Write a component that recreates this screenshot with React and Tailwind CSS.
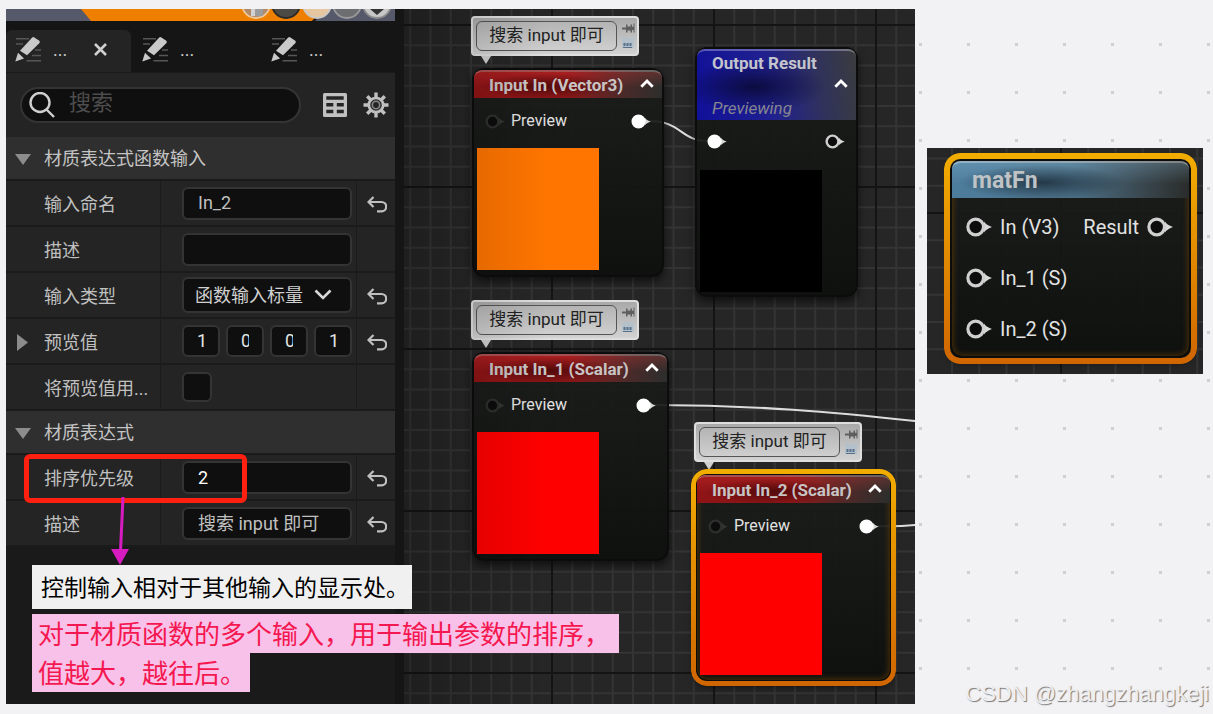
import React, { useState } from 'react';

const PencilIcon = () => (
  <svg width="26" height="26" viewBox="0 0 26 26" className="shrink-0" aria-hidden="true">
    <g stroke="#565656" strokeWidth="1.6">
      <path d="M1 2.7h13M1 8h7M20 14h6M17 19.5h9M11.5 24.7h14.5" />
    </g>
    <path d="M17.2 1.4q1-1 2.200 0l4.900 3.400q1 1 .2 2.100L12 19.200 5 14.800z" fill="#c9c9c9" />
    <path d="M3 16.800l6 5.800L.3 25.500z" fill="#c9c9c9" />
  </svg>
);

const TableIcon = () => (
  <svg width="24" height="24" viewBox="0 0 24 24" aria-hidden="true">
    <rect width="24" height="24" rx="1.5" fill="#c0c0c0" />
    <path
      d="M3.300 3.300h17.400v3.400H3.300zM3.300 10h7v3.400h-7zM13.800 10h7v3.400h-7zM3.300 16.800h7v3.400h-7zM13.800 16.800h7v3.400h-7z"
      fill="#242424"
    />
  </svg>
);

const GearIcon = () => (
  <svg width="26" height="26" viewBox="-13 -13 26 26" aria-hidden="true">
    <g stroke="#c0c0c0" strokeWidth="3.400">
      <path d="M0-12.500V-7M0 12.500V7M-12.500 0H-7M12.500 0H7M-8.800-8.800L-5-5M8.800 8.800L5 5M-8.800 8.800L-5 5M8.800-8.800L5-5" />
    </g>
    <circle r="7.200" fill="#242424" stroke="#c0c0c0" strokeWidth="2.800" />
    <circle r="3.700" fill="none" stroke="#8a8a8a" strokeWidth="1.600" />
  </svg>
);

const ResetIcon = () => (
  <svg width="20" height="17" viewBox="0 0 20 17" fill="none" stroke="#c0c0c0" strokeWidth="2.200" aria-hidden="true">
    <path d="M6.500 1L1.500 6l5 5M1.500 6H14.500a4.600 4.600 0 0 1 0 9.400H10" />
  </svg>
);

const Pin = ({ filled, dim, large }) => (
  <svg
    className={large ? 'h-5 w-[26px] shrink-0' : 'h-[15px] w-5 shrink-0'}
    viewBox="0 0 26 20"
    aria-hidden="true"
  >
    <path d="M18 4.500q1.500 3 8 5.500-6.500 2.500-8 5.500z" fill={dim ? '#343634' : '#d8d8d8'} />
    <circle
      cx="9.700"
      cy="10"
      r="7.800"
      fill={filled ? '#fff' : '#0b0c0b'}
      stroke={dim ? '#2d2f2d' : filled ? '#fff' : '#cfcfcf'}
      strokeWidth="3.200"
    />
  </svg>
);

const CaretUp = () => (
  <svg width="14" height="9" viewBox="0 0 14 9" fill="none" stroke="#fff" strokeWidth="2.800" aria-hidden="true">
    <path d="M1.300 7.700L7 2l5.700 5.700" />
  </svg>
);

// Strip of the 3D preview that is visible above the tabs
const ViewportStrip = () => (
  <svg className="block h-3 w-full bg-[#555969]" viewBox="0 0 389 12" preserveAspectRatio="none" aria-hidden="true">
    <path d="M75 0H318l-12 12H85z" fill="#ef7f00" />
    <path d="M318 0l-12 12h3l12-12z" fill="#24130a" />
    {[
      [250, '#b08a68', '#efc79a'],
      [280, '#4c4a45', '#2a2926'],
      [311, '#e5c6a0', '#c9c9c9'],
      [341, '#6c6e70', '#9a9a9a'],
      [371, '#c7c7c7', '#8c8c8c'],
    ].map(([x, fill, stroke]) => (
      <circle key={x} cx={x} cy="-5" r="14" fill={fill} stroke={stroke} strokeWidth="1.800" />
    ))}
    <path d="M245 0h12v7h-12z" fill="#9c9c9c" />
    <path d="M245 0h4v7h-4z" fill="#d2d2d2" />
    <path d="M364 0h14l-7 6z" fill="#333" />
  </svg>
);

const CategoryHeader = ({ children }) => (
  <h2 className="flex h-11 items-center border-b-2 border-[#1a1a1a] bg-[#2f2f2f] pl-2 pt-0.5 text-[18px] leading-6 text-[#c4c4c4]">
    <svg width="18" height="12" viewBox="0 0 18 12" className="mr-3" aria-hidden="true">
      <path d="M1 1h16L9 12z" fill="#8c8c8c" />
    </svg>
    {children}
  </h2>
);

const Row = ({ label, htmlFor, reset, expandable, children }) => (
  <div className="flex h-[46px] border-b-2 border-[#1b1b1b] bg-[#242424] text-[18px] text-[#c0c0c0]">
    <div className="flex w-[155px] shrink-0 items-center border-r border-[#1b1b1b] pl-2.5 pt-0.5">
      <span className="w-7 shrink-0">
        {expandable && (
          <svg width="12" height="17" viewBox="0 0 12 17" aria-hidden="true">
            <path d="M1 0l11 8.500L1 17z" fill="#8c8c8c" />
          </svg>
        )}
      </span>
      <label htmlFor={htmlFor} className="whitespace-nowrap">{label}</label>
    </div>
    <div className="flex min-w-0 flex-1 items-center pl-[21px] pr-1">{children}</div>
    <div className="flex w-[39px] shrink-0 items-center justify-center border-l border-[#1b1b1b] pl-0.5 pt-0.5">
      {reset && (
        <button type="button" aria-label={`重置${label}`}>
          <ResetIcon />
        </button>
      )}
    </div>
  </div>
);

const TextField = ({ id, value, bright }) => {
  const [text, setText] = useState(value);
  return (
    <input
      id={id}
      type="text"
      value={text}
      onChange={(e) => setText(e.target.value)}
      className={`h-[33px] w-full rounded-md border-2 border-[#343434] bg-[#0f0f0f] px-3.5 text-[18px] outline-none ${
        bright ? 'text-white' : 'pb-0.5 text-[#c0c0c0]'
      }`}
    />
  );
};

const DetailsPanel = () => {
  const [vector, setVector] = useState(['1', '0', '0', '1']);

  const handleVectorChange = (index, value) => {
    setVector(vector.map((v, i) => (i === index ? value : v)));
  };

  return (
    <aside className="w-[389px] shrink-0 bg-[#1a1a1a]">
      <ViewportStrip />

      <div className="flex h-[52px] items-end border-b border-[#1a1a1a] bg-[#151515]">
        <button type="button" className="flex h-[42px] w-[125px] items-center rounded-t-md bg-[#242424] pb-1 pl-[9px] text-[18px] text-[#c9c9c9]">
          <PencilIcon />
          <span className="ml-3">...</span>
          <svg width="13" height="13" viewBox="0 0 13 13" className="ml-[27px]" stroke="#d0d0d0" strokeWidth="2.600" aria-hidden="true">
            <path d="M1 1l11 11M12 1L1 12" />
          </svg>
        </button>
        <button type="button" className="flex h-[42px] w-[129px] items-center pb-1 pl-[11px] text-[18px] text-[#c9c9c9]">
          <PencilIcon />
          <span className="ml-3">...</span>
        </button>
        <button type="button" className="flex h-[42px] w-[129px] items-center pb-1 pl-[11px] text-[18px] text-[#c9c9c9]">
          <PencilIcon />
          <span className="ml-3">...</span>
        </button>
      </div>

      <div className="flex h-16 items-center bg-[#242424] pl-3.5 pr-1.5">
        <label className="flex h-9 flex-1 items-center rounded-full border-2 border-[#343434] bg-[#0f0f0f] pl-[7px]">
          <svg width="26" height="26" viewBox="0 0 26 26" fill="none" stroke="#d0d0d0" strokeWidth="2.400" className="shrink-0" aria-hidden="true">
            <circle cx="11" cy="10.500" r="9.500" />
            <path d="M17.500 17.500l7.500 7.500" />
          </svg>
          <input
            type="search"
            placeholder="搜索"
            aria-label="搜索"
            className="ml-3.5 h-8 w-full min-w-0 bg-transparent pb-1.5 text-[22px] leading-7 text-[#c0c0c0] outline-none placeholder:text-[#4d4d4d]"
          />
        </label>
        <button type="button" aria-label="表格" className="ml-[22px]">
          <TableIcon />
        </button>
        <button type="button" aria-label="设置" className="ml-4">
          <GearIcon />
        </button>
      </div>

      <CategoryHeader>材质表达式函数输入</CategoryHeader>
      <Row label="输入命名" htmlFor="input-name" reset>
        <TextField id="input-name" value="In_2" />
      </Row>
      <Row label="描述" htmlFor="input-desc">
        <TextField id="input-desc" value="" />
      </Row>
      <Row label="输入类型" htmlFor="input-type" reset>
        <div className="relative w-full">
          <select
            id="input-type"
            className="h-[36px] w-full appearance-none rounded-md border-2 border-[#343434] bg-[#0f0f0f] pl-[11px] pt-px text-[18px] text-[#d0d0d0] outline-none"
          >
            <option>函数输入标量</option>
          </select>
          <svg
            width="18"
            height="11"
            viewBox="0 0 18 11"
            className="pointer-events-none absolute right-5 top-3"
            fill="none"
            stroke="#d8d8d8"
            strokeWidth="2.600"
            aria-hidden="true"
          >
            <path d="M1.500 1.500L9 9l7.500-7.500" />
          </svg>
        </div>
      </Row>
      <Row label="预览值" htmlFor="preview-0" reset expandable>
        <div className="flex w-full gap-1.5">
          {vector.map((v, i) => (
            <input
              key={i}
              id={`preview-${i}`}
              aria-label={`预览值 ${i + 1}`}
              type="text"
              value={v}
              onChange={(e) => handleVectorChange(i, e.target.value)}
              className="h-8 min-w-0 flex-1 rounded-md border-2 border-[#343434] bg-[#0f0f0f] px-[13px] pb-0.5 text-[18px] text-[#e4e4e4] outline-none"
            />
          ))}
        </div>
      </Row>
      <Row label="将预览值用..." htmlFor="use-preview">
        <input
          id="use-preview"
          type="checkbox"
          className="size-[30px] appearance-none rounded-md border-2 border-[#343434] bg-[#0f0f0f] checked:bg-[#0070e0]"
        />
      </Row>

      <CategoryHeader>材质表达式</CategoryHeader>
      <Row label="排序优先级" htmlFor="sort-priority" reset>
        <TextField id="sort-priority" value="2" bright />
      </Row>
      <Row label="描述" htmlFor="expr-desc" reset>
        <TextField id="expr-desc" value="搜索 input 即可" />
      </Row>
    </aside>
  );
};

const CommentBubble = ({ className }) => (
  <div className={`absolute flex h-10 w-[168px] rounded border-2 border-[#dedede] bg-linear-to-b from-[#a9a9a9] to-[#d2d2d2] p-1 pl-[3px] ${className}`}>
    <span className="flex h-[30px] w-[141px] shrink-0 items-center justify-center self-center rounded-md border border-[#555] bg-linear-to-b from-[#b4b4b4] to-[#cfcfcf] pb-0.5 text-[17px] leading-6 text-[#222]">
      搜索 input 即可
    </span>
    <svg width="14" height="28" viewBox="0 0 14 28" className="ml-1 shrink-0" aria-hidden="true">
      <path d="M1 5.500h4v-3h1.500v2h3v-2H11v2.200h1.500V1.500h1v9h-1V8H11v2.500H9.500v-2h-3v2H5v-3H1z" fill="#5f5f5f" />
      <rect x="1" y="16" width="12" height="10" fill="#b4c0ca" />
      <path d="M2.500 21h2v3h-2zM5.500 21h2v3h-2zM8.500 21h2v3h-2zM2 25h9v1H2z" fill="#56708c" />
    </svg>
    <svg width="10" height="8" viewBox="0 0 10 8" className="absolute left-2 top-[38px]" aria-hidden="true">
      <path d="M0 0h10L5 8z" fill="#cfcfcf" />
    </svg>
  </div>
);

const NodeFrame = ({ selected, large, className, children }) => (
  <article
    className={`absolute rounded-xl border-2 border-[#0b0c0b] bg-linear-to-b from-[#1b1d1b]/92 to-[#0e100e]/96 shadow-[0_4px_8px_rgba(0,0,0,0.6)] ${
      selected ? 'inset-shadow-[0_0_5px_2px_rgba(110,65,0,0.5)]' : ''
    } ${className}`}
  >
    {selected && (
      <div
        className={`pointer-events-none absolute rounded-2xl bg-linear-to-b from-[#f2ad00] to-[#cf6500] [mask:linear-gradient(#000_0_0)_content-box_exclude,linear-gradient(#000_0_0)] ${
          large ? '-inset-2 p-[6px]' : '-inset-1.5 p-[5px]'
        }`}
      />
    )}
    {children}
  </article>
);

const InputNode = ({ title, color, selected, className }) => (
  <NodeFrame selected={selected} className={`h-[209px] ${className}`}>
    <header className="flex h-7 items-center justify-between rounded-t-lg border-t-2 border-white/25 bg-[radial-gradient(ellipse_35%_50%_at_38%_55%,rgba(40,0,0,0.6),transparent),linear-gradient(180deg,rgba(255,60,60,0.22),transparent_60%),linear-gradient(90deg,#8e1416_0%,#8e1719_50%,#4a2a29_80%,#2c2e2c_100%)] pl-[15px] pr-2">
      <h3 className="text-[17px] font-bold leading-6 text-[#c8c4c4]">{title}</h3>
      <button type="button" aria-label="折叠" className="pb-1">
        <CaretUp />
      </button>
    </header>
    <div className="flex h-[50px] items-center pb-1 pl-[11px] pr-[11px] text-[16px] text-[#e2e2e2]">
      <Pin dim />
      <span className="ml-1.5">Preview</span>
      <span className="ml-auto flex">
        <Pin filled />
      </span>
    </div>
    <div className={`ml-[3px] size-[122px] ${color}`} />
  </NodeFrame>
);

const OutputNode = ({ className }) => (
  <NodeFrame className={`h-[250px] ${className}`}>
    <header className="flex h-[71px] items-center justify-between rounded-t-lg border-t-2 border-white/30 bg-[radial-gradient(ellipse_45%_38%_at_36%_52%,rgba(8,8,50,0.85),transparent),linear-gradient(80deg,#10109a_0%,#20208f_45%,#30325c_75%,#3a3c3e_100%)] pl-[15px] pr-2">
      <div className="flex h-full flex-col justify-between">
        <h3 className="text-[17px] font-bold leading-6 text-[#c4c4cc]">Output Result</h3>
        <p className="text-[17px] italic leading-6 text-[#85858f]">Previewing</p>
      </div>
      <button type="button" aria-label="折叠" className="pb-1">
        <CaretUp />
      </button>
    </header>
    <div className="flex h-[50px] items-start justify-between pl-2.5 pr-[11px] pt-3.5">
      <Pin filled />
      <Pin />
    </div>
    <div className="ml-[3px] size-[122px] bg-black" />
  </NodeFrame>
);

// Canvas grid: eight thin cells inside every heavy one
const Grid = ({ id, x, y, size }) => (
  <>
    <defs>
      <pattern id={id} x={x} y={y} width={size} height={size} patternUnits="userSpaceOnUse">
        {[1, 2, 3, 4, 5, 6, 7].map((n) => (
          <path
            key={n}
            d={`M${(size / 8) * n + 1} 0V${size}M0 ${(size / 8) * n + 1}H${size}`}
            stroke="#343434"
            strokeWidth="2"
          />
        ))}
        <path d={`M1 0V${size}M0 1H${size}`} stroke="#141414" strokeWidth="2" />
      </pattern>
    </defs>
    <rect width="100%" height="100%" fill={`url(#${id})`} />
  </>
);

const MaterialGraph = () => (
  <section className="relative min-w-0 flex-1 overflow-hidden bg-[#262626]">
    <svg className="absolute inset-0 size-full" aria-hidden="true">
      <Grid id="graph-grid" x={147} y={15} size={162} />
      <g fill="none" stroke="#dcdcdc" strokeWidth="2">
        <path d="M245 112C278 112 276 132 304 132" />
        <path d="M250 396C350 396 430 403 520 413" />
        <path d="M474 517Q495 518 520 515" />
      </g>
    </svg>

    <CommentBubble className="left-[67px] top-[7px]" />
    <InputNode title="Input In (Vector3)" color="bg-[#ff7500]" className="left-[68px] top-[59px] w-[192px]" />

    <OutputNode className="left-[291px] top-[38px] w-[163px]" />

    <CommentBubble className="left-[67px] top-[291px]" />
    <InputNode title="Input In_1 (Scalar)" color="bg-[#ff0000]" className="left-[68px] top-[343px] w-[197px]" />

    <CommentBubble className="left-[290px] top-[413px]" />
    <InputNode title="Input In_2 (Scalar)" color="bg-[#ff0000]" selected className="left-[291px] top-[464px] w-[197px]" />

    <div className="pointer-events-none absolute inset-y-0 left-0 w-36 bg-linear-to-r from-black/20 to-transparent" />
  </section>
);

const Annotations = () => (
  <div className="pointer-events-none absolute inset-0">
    <div className="absolute left-[18px] top-[445px] h-[49px] w-[223px] rounded-md border-[5px] border-[#ff2010]" />
    <svg width="20" height="68" viewBox="0 0 20 68" className="absolute left-[104px] top-[488px]" aria-hidden="true">
      <path d="M13 0L10.500 54" stroke="#d61bc0" strokeWidth="3" />
      <path d="M1 52h18L10 68z" fill="#d61bc0" />
    </svg>
    <div className="absolute left-[26px] top-[556px] text-black">
      <p className="h-11 w-[380px] bg-[#f0f0f0] pl-[9px] pt-2 text-[23px] leading-8 whitespace-nowrap">
        控制输入相对于其他输入的显示处。
      </p>
      <p className="mt-[5px] text-[26px] leading-9 whitespace-nowrap text-[#f5174f]">
        <span className="block w-[587px] bg-[#f8c1ea] pl-1.5 pt-[3px]">对于材质函数的多个输入，用于输出参数的排序，</span>
        <span className="block w-[218px] bg-[#f8c1ea] pl-1.5 pt-[3px]">值越大，越往后。</span>
      </p>
    </div>
  </div>
);

const FunctionNode = () => (
  <section className="relative h-[226px] overflow-hidden bg-[#262626]">
    <svg className="absolute inset-0 size-full" aria-hidden="true">
      <Grid id="function-grid" x={133} y={64} size={218} />
    </svg>
    <NodeFrame selected large className="left-[23px] top-[11px] h-[199px] w-[241px]">
      <header className="flex h-[37px] items-center rounded-t-lg border-t-2 border-white/40 bg-[radial-gradient(ellipse_35%_50%_at_38%_55%,rgba(15,25,35,0.65),transparent),linear-gradient(180deg,rgba(150,200,230,0.25),transparent_60%),linear-gradient(90deg,#4d7d9d_0%,#4c7289_50%,#3a4850_80%,#2a2c2a_100%)] pl-5">
        <h3 className="text-[23px] font-bold leading-7 text-[#bfc3c6]">matFn</h3>
      </header>
      <ul className="pl-3.5 pr-4 pt-[3px] text-[20px] leading-6 text-[#e2e2e2]">
        <li className="flex h-[51px] items-center gap-2">
          <Pin large />
          In (V3)
          <span className="ml-auto">Result</span>
          <Pin large />
        </li>
        <li className="flex h-[51px] items-center gap-2">
          <Pin large />
          In_1 (S)
        </li>
        <li className="flex h-[51px] items-center gap-2">
          <Pin large />
          In_2 (S)
        </li>
      </ul>
    </NodeFrame>
  </section>
);

const App = () => (
  <main className="relative flex min-h-screen gap-3 bg-[#f2f2f5] bg-[conic-gradient(from_270deg_at_3px_3px,#cfcfd1_90deg,transparent_0)] bg-[length:48px_48px] bg-[position:7px_43px] pb-2.5 pl-1.5 pr-2.5 pt-[9px] font-[Roboto,'Noto_Sans_CJK_SC',sans-serif]">
    <div className="relative flex min-w-0 flex-1">
      <DetailsPanel />
      <div className="w-[9px] shrink-0 bg-[#151515]" />
      <MaterialGraph />
      <Annotations />
    </div>
    <div className="w-[276px] shrink-0 pt-[139px]">
      <FunctionNode />
    </div>
    <p className="absolute bottom-1.5 right-1 font-['Liberation_Sans',sans-serif] text-[22px] leading-7 text-[#f0f0f2] [text-shadow:1px_1px_1px_#777]">
      CSDN @zhangzhangkeji
    </p>
  </main>
);

export default App;
